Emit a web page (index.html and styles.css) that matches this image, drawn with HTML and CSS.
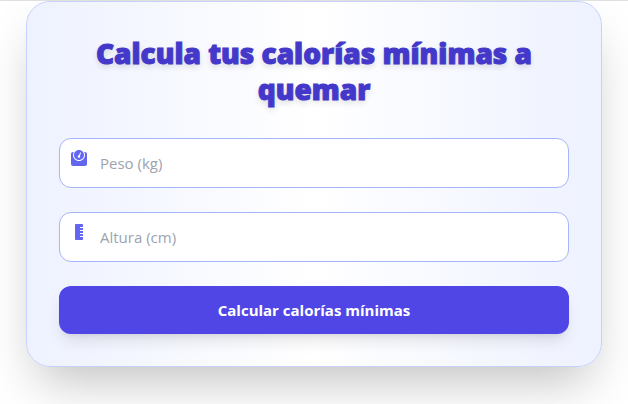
FILE: index.html
```html
<!DOCTYPE html>
<html lang="es">
<head>
  <meta charset="utf-8">
  <meta name="viewport" content="width=device-width, initial-scale=1">
  <title>Calorías mínimas</title>
  <link rel="stylesheet" href="styles.css">
</head>
<body>
  <main class="page">
    <section class="card">
      <h1 class="title">Calcula tus calorías mínimas a quemar</h1>
      <form class="form">
        <div class="field">
          <svg class="icon" viewBox="0 0 512 512" aria-hidden="true"><path d="M448 64h-25.98C438.44 92.28 448 125.01 448 160c0 105.87-86.13 192-192 192S64 265.87 64 160c0-34.99 9.56-67.72 25.98-96H64C28.71 64 0 92.71 0 128v320c0 35.29 28.71 64 64 64h384c35.29 0 64-28.71 64-64V128c0-35.29-28.71-64-64-64zM256 320c88.37 0 160-71.63 160-160S344.37 0 256 0 96 71.63 96 160s71.63 160 160 160zm-.3-151.94l33.58-78.36c3.5-8.17 12.94-11.92 21.03-8.41 8.12 3.48 11.88 12.89 8.41 21l-33.67 78.55C291.73 188 296 197.45 296 208c0 22.09-17.91 40-40 40s-40-17.91-40-40c0-21.98 17.76-39.77 39.7-39.94z"/></svg>
          <input class="input" type="text" inputmode="decimal" placeholder="Peso (kg)" aria-label="Peso (kg)">
        </div>
        <div class="field">
          <svg class="icon" viewBox="0 0 512 512" aria-hidden="true"><path d="M296 416c-4.42 0-8-3.58-8-8v-16c0-4.42 3.58-8 8-8h88v-64h-88c-4.42 0-8-3.58-8-8v-16c0-4.42 3.58-8 8-8h88v-64h-88c-4.42 0-8-3.58-8-8v-16c0-4.42 3.58-8 8-8h88v-64h-88c-4.42 0-8-3.58-8-8v-16c0-4.42 3.58-8 8-8h88V32c0-17.67-14.33-32-32-32H160c-17.67 0-32 14.33-32 32v448c0 17.67 14.33 32 32 32h192c17.67 0 32-14.33 32-32v-64h-88z"/></svg>
          <input class="input" type="text" inputmode="decimal" placeholder="Altura (cm)" aria-label="Altura (cm)">
        </div>
        <button class="submit" type="button">Calcular calorías mínimas</button>
      </form>
    </section>
  </main>
</body>
</html>
```
FILE: styles.css
```css
* {
  box-sizing: border-box;
}

body {
  margin: 0;
  background: #fff;
  font-family: "Segoe UI", "Open Sans", "Noto Sans", sans-serif;
  font-size: 15px;
  line-height: 24px;
}

.page {
  border-top: 1px solid #e0e0e0;
  padding: 0 26px 37px;
  overflow: hidden;
}

.card {
  max-width: 576px;
  margin: 0 auto;
  padding: 33px 32px 32px;
  border: 1px solid #c7d2fe;
  border-radius: 24px;
  background: linear-gradient(to right, #eef2ff, #fff, #eef2ff);
  box-shadow: 0 25px 50px -12px rgba(0, 0, 0, 0.25);
}

.title {
  margin: 0 0 31px;
  color: #4338ca;
  font-size: 28px;
  font-weight: 800;
  line-height: 36px;
  text-align: center;
  -webkit-text-stroke: 1px #4338ca;
  text-shadow: 0 3px 6px rgba(0, 0, 0, 0.14);
}

.form {
  display: grid;
  gap: 24px;
}

.field {
  position: relative;
}

.icon {
  position: absolute;
  top: 12px;
  left: 12px;
  width: 16px;
  height: 16px;
  fill: #6366f1;
}

.input {
  display: block;
  width: 100%;
  height: 50px;
  padding: 12px 16px 12px 40px;
  border: 1px solid #a5b4fc;
  border-radius: 12px;
  background: #fff;
  color: #1f2937;
  font: inherit;
}

.input::placeholder {
  color: #9ca3af;
  opacity: 1;
}

.submit {
  height: 48px;
  padding: 12px 16px;
  border: 0;
  border-radius: 12px;
  background: #4f46e5;
  color: #fff;
  font: inherit;
  font-weight: 700;
  cursor: pointer;
  box-shadow: 0 10px 15px -3px rgba(0, 0, 0, 0.1), 0 4px 6px -4px rgba(0, 0, 0, 0.1);
}
```
